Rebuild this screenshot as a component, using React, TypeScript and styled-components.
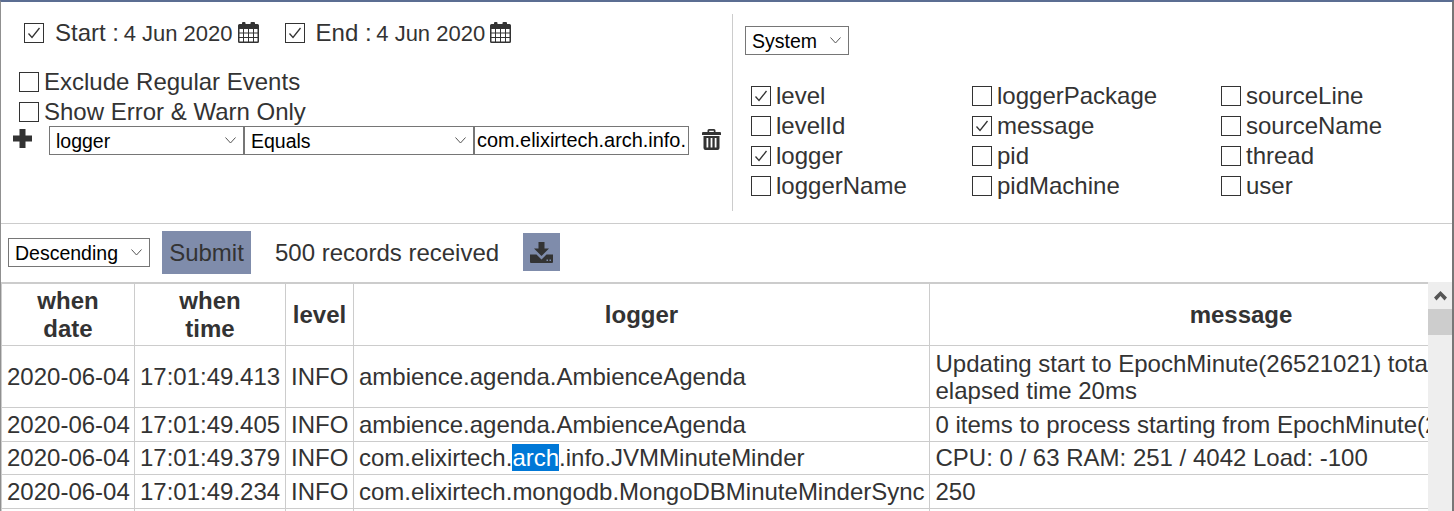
import * as React from 'react';
import styled, { createGlobalStyle } from 'styled-components';

const GlobalStyle = createGlobalStyle`
  html, body {
    margin: 0;
    height: 100%;
    overflow: hidden;
    background: #ffffff;
  }
  body {
    font-family: 'Liberation Sans', Arial, sans-serif;
    font-size: 24px;
    color: #333333;
  }
`;

const Page = styled.div`
  width: 1454px;
  height: 511px;
  box-sizing: border-box;
  border-top: 2px solid #5b6d92;
  border-left: 1px solid #909090;
  border-right: 2px solid #777777;
  display: flex;
  flex-direction: column;
  overflow: hidden;
`;

const TopPanel = styled.div`
  height: 222px;
  flex: none;
  box-sizing: border-box;
  border-bottom: 1px solid #cccccc;
  display: flex;
`;

const LeftPanel = styled.div`
  width: 731px;
  flex: none;
  box-sizing: border-box;
  padding-top: 16px;
`;

const DateRow = styled.div`
  height: 30px;
  display: flex;
  align-items: center;
  padding-left: 23px;
`;

const DateGroup = styled.div`
  display: flex;
  align-items: center;
  margin-right: 26px;
`;

const DateLabel = styled.span`
  margin-left: 11px;
  white-space: pre;
  display: flex;
  align-items: baseline;
`;

const DateValue = styled.span`
  font-size: 22px;
  margin-left: -2px;
`;

const CalendarSvg = styled.svg`
  width: 21px;
  height: 21px;
  margin-left: 5px;
  margin-top: -1px;
  flex: none;
`;

const OptionList = styled.div`
  margin-top: 19px;
  padding-left: 18px;
`;

const CheckRow = styled.label`
  height: 30px;
  display: flex;
  align-items: center;
  gap: 5px;
`;

const Box = styled.span`
  width: 20px;
  height: 20px;
  box-sizing: border-box;
  border: 1px solid #333333;
  background: #ffffff;
  flex: none;
  display: flex;
  align-items: center;
  justify-content: center;
`;

const FilterRow = styled.div`
  display: flex;
  align-items: center;
  height: 29px;
  margin-top: -1px;
  padding-left: 12px;
`;

const PlusSvg = styled.svg`
  width: 19px;
  height: 19px;
  flex: none;
  margin-right: 17px;
  margin-top: -4px;
`;

const TrashSvg = styled.svg`
  width: 19px;
  height: 21px;
  flex: none;
  margin-left: 13px;
  margin-top: -2px;
`;

const SelectWrap = styled.div<{ $width: number }>`
  position: relative;
  width: ${(p) => p.$width}px;
  flex: none;
`;

const NativeSelect = styled.select`
  appearance: none;
  width: 100%;
  height: 29px;
  box-sizing: border-box;
  border: 1px solid #767676;
  border-radius: 0;
  background: #ffffff;
  color: #000000;
  font-family: inherit;
  font-size: 19.5px;
  padding: 0 0 0 6px;
  margin: 0;
  display: block;
`;

const Chevron = styled.svg`
  position: absolute;
  right: 8px;
  top: 11px;
  width: 11px;
  height: 7px;
  pointer-events: none;
`;

const TextField = styled.input`
  width: 215px;
  height: 29px;
  flex: none;
  box-sizing: border-box;
  border: 1px solid #767676;
  border-radius: 0;
  margin: 0;
  padding: 0 2px;
  font-family: inherit;
  font-size: 19.9px;
  color: #000000;
  background: #ffffff;
`;

const RightPanel = styled.div`
  flex: 1;
  margin: 12px 0;
  border-left: 1px solid #cccccc;
  padding: 12px 0 0 12px;
`;

const ColumnGrid = styled.div`
  margin-top: 26px;
  padding-left: 6px;
  display: grid;
  grid-template-columns: 221px 249px 1fr;
  grid-auto-flow: column;
  grid-template-rows: repeat(4, 30px);
`;

const Toolbar = styled.div`
  height: 58px;
  flex: none;
  box-sizing: border-box;
  display: flex;
  align-items: center;
  padding: 0 0 1px 7px;
`;

const SubmitButton = styled.button`
  width: 89px;
  height: 43px;
  margin-left: 12px;
  border: none;
  background: #7f8cab;
  color: #333333;
  font-family: inherit;
  font-size: 24px;
  padding: 0;
`;

const RecordCount = styled.span`
  margin-left: 24px;
`;

const DownloadButton = styled.button`
  width: 37px;
  height: 38px;
  margin: -1px 0 0 24px;
  border: none;
  background: #7f8cab;
  padding: 0;
  display: flex;
  align-items: center;
  justify-content: center;
`;

const TableArea = styled.div`
  flex: 1;
  min-height: 0;
  display: flex;
`;

const TableClip = styled.div`
  flex: 1;
  min-width: 0;
  overflow: hidden;
  border-top: 2px solid #cccccc;
`;

const LogTable = styled.table`
  table-layout: fixed;
  border-collapse: collapse;
  width: 1551px;
`;

const HeadCell = styled.th`
  border: 1px solid #cccccc;
  border-top: none;
  padding: 3px 5px;
  font-size: 24px;
  line-height: 27.5px;
  font-weight: bold;
  text-align: center;
  color: #333333;
`;

const Cell = styled.td`
  border: 1px solid #cccccc;
  padding: 3.5px 5px 2.5px;
  font-size: 24px;
  line-height: 26.5px;
  white-space: nowrap;
  overflow: hidden;
  color: #333333;

  &:last-child {
    padding-left: 5.5px;
  }
`;

const WrappedText = styled.div`
  line-height: 27.5px;
`;

const Highlight = styled.span`
  background: #0078d7;
  color: #ffffff;
`;

const ScrollBar = styled.div`
  width: 24px;
  flex: none;
  background: #eeeeee;
  display: flex;
  flex-direction: column;
`;

const ScrollUp = styled.div`
  height: 27px;
  display: flex;
  align-items: center;
  justify-content: center;
  padding-top: 1px;
  box-sizing: border-box;
`;

const ScrollThumb = styled.div`
  height: 26px;
  background: #cdcdcd;
`;

const Tick = () => (
  <svg width="14" height="12" viewBox="0 0 14 12" fill="none">
    <path d="M1.5 6.5 L5 10.5 L12.5 1" stroke="#333333" strokeWidth="1.3" />
  </svg>
);

const CheckItem: React.FC<{ checked?: boolean; label: string }> = ({ checked, label }) => (
  <CheckRow>
    <Box>{checked && <Tick />}</Box>
    {label}
  </CheckRow>
);

const CalendarIcon = () => (
  <CalendarSvg viewBox="0 0 21 21">
    <path
      fillRule="evenodd"
      fill="#333333"
      d="M3 2h1V1a1 1 0 0 1 1-1h1.500a1 1 0 0 1 1 1v1h5V1a1 1 0 0 1 1-1H16a1 1 0 0 1 1 1v1h2.500A1.500 1.500 0 0 1 21 3.500V19.500A1.500 1.500 0 0 1 19.500 21H1.500A1.500 1.500 0 0 1 0 19.500V3.500A1.500 1.500 0 0 1 1.500 2ZM1.500 7v3.500h3.500V7ZM6 7v3.500h4V7ZM11 7v3.500h4V7ZM16 7v3.500h3.500V7ZM1.500 11.500v3.500h3.500v-3.500ZM6 11.500v3.500h4v-3.500ZM11 11.500v3.500h4v-3.500ZM16 11.500v3.500h3.500v-3.500ZM1.500 16v3.500h3.500V16ZM6 16v3.500h4V16ZM11 16v3.500h4V16ZM16 16v3.500h3.500V16Z"
    />
  </CalendarSvg>
);

const PlusIcon = () => (
  <PlusSvg viewBox="0 0 19 19">
    <path fill="#333333" d="M6.500 0h6v6.500H19v6h-6.500V19h-6v-6.500H0v-6h6.500Z" />
  </PlusSvg>
);

const TrashIcon = () => (
  <TrashSvg viewBox="0 0 19 21">
    <path
      fillRule="evenodd"
      fill="#333333"
      d="M5.500 3V1.500A1.500 1.500 0 0 1 7 0h5a1.500 1.500 0 0 1 1.500 1.500V3H18a1 1 0 0 1 1 1v2H0V4a1 1 0 0 1 1-1ZM7.200 3h4.600V1.700H7.200ZM1.500 7h16v12a2 2 0 0 1-2 2h-12a2 2 0 0 1-2-2ZM4.500 9v9.500h1.800V9ZM8.600 9v9.500h1.800V9ZM12.700 9v9.500h1.800V9Z"
    />
  </TrashSvg>
);

const DownloadIcon = () => (
  <svg width="23" height="21" viewBox="0 0 23 21">
    <path
      fillRule="evenodd"
      fill="#333333"
      d="M8.500 0h6v6.500H19L11.500 14 4 6.500h4.500ZM0 12.500h6.500l5 5 5-5H23V20a1 1 0 0 1-1 1H1a1 1 0 0 1-1-1ZM16.500 17.500v1.500h1.500v-1.500ZM19.500 17.500v1.500h1.500v-1.500Z"
    />
  </svg>
);

const Select: React.FC<{ width: number; value: string }> = ({ width, value }) => (
  <SelectWrap $width={width}>
    <NativeSelect defaultValue={value}>
      <option>{value}</option>
    </NativeSelect>
    <Chevron viewBox="0 0 11 7" fill="none">
      <path d="M0.5 0.5 L5.5 6 L10.500 0.5" stroke="#555555" strokeWidth="1" />
    </Chevron>
  </SelectWrap>
);

const columns = [
  ['level', true],
  ['levelId', false],
  ['logger', true],
  ['loggerName', false],
  ['loggerPackage', false],
  ['message', true],
  ['pid', false],
  ['pidMachine', false],
  ['sourceLine', false],
  ['sourceName', false],
  ['thread', false],
  ['user', false],
] as const;

const rows: { time: string; logger: React.ReactNode; message: React.ReactNode }[] = [
  {
    time: '17:01:49.413',
    logger: 'ambience.agenda.AmbienceAgenda',
    message: (
      <WrappedText>
        Updating start to EpochMinute(26521021) total
        <br />
        elapsed time 20ms
      </WrappedText>
    ),
  },
  {
    time: '17:01:49.405',
    logger: 'ambience.agenda.AmbienceAgenda',
    message: '0 items to process starting from EpochMinute(26521021)',
  },
  {
    time: '17:01:49.379',
    logger: (
      <>
        com.elixirtech.<Highlight>arch</Highlight>.info.JVMMinuteMinder
      </>
    ),
    message: 'CPU: 0 / 63 RAM: 251 / 4042 Load: -100',
  },
  {
    time: '17:01:49.234',
    logger: 'com.elixirtech.mongodb.MongoDBMinuteMinderSync',
    message: '250',
  },
];

const App: React.FC = () => (
  <Page>
    <GlobalStyle />
    <TopPanel>
      <LeftPanel>
        <DateRow>
          <DateGroup>
            <Box>
              <Tick />
            </Box>
            <DateLabel>
              Start : <DateValue>4 Jun 2020</DateValue>
            </DateLabel>
            <CalendarIcon />
          </DateGroup>
          <DateGroup>
            <Box>
              <Tick />
            </Box>
            <DateLabel>
              End : <DateValue>4 Jun 2020</DateValue>
            </DateLabel>
            <CalendarIcon />
          </DateGroup>
        </DateRow>
        <OptionList>
          <CheckItem label="Exclude Regular Events" />
          <CheckItem label="Show Error & Warn Only" />
        </OptionList>
        <FilterRow>
          <PlusIcon />
          <Select width={195} value="logger" />
          <Select width={230} value="Equals" />
          <TextField defaultValue="com.elixirtech.arch.info." />
          <TrashIcon />
        </FilterRow>
      </LeftPanel>
      <RightPanel>
        <Select width={104} value="System" />
        <ColumnGrid>
          {columns.map(([label, checked]) => (
            <CheckItem key={label} label={label} checked={checked} />
          ))}
        </ColumnGrid>
      </RightPanel>
    </TopPanel>
    <Toolbar>
      <Select width={142} value="Descending" />
      <SubmitButton>Submit</SubmitButton>
      <RecordCount>500 records received</RecordCount>
      <DownloadButton>
        <DownloadIcon />
      </DownloadButton>
    </Toolbar>
    <TableArea>
      <TableClip>
        <LogTable>
          <colgroup>
            <col style={{ width: 133 }} />
            <col style={{ width: 151 }} />
            <col style={{ width: 68 }} />
            <col style={{ width: 576 }} />
            <col style={{ width: 623 }} />
          </colgroup>
          <thead>
            <tr>
              <HeadCell>
                when
                <br />
                date
              </HeadCell>
              <HeadCell>
                when
                <br />
                time
              </HeadCell>
              <HeadCell>level</HeadCell>
              <HeadCell>logger</HeadCell>
              <HeadCell>message</HeadCell>
            </tr>
          </thead>
          <tbody>
            {rows.map((row) => (
              <tr key={row.time}>
                <Cell>2020-06-04</Cell>
                <Cell>{row.time}</Cell>
                <Cell>INFO</Cell>
                <Cell>{row.logger}</Cell>
                <Cell>{row.message}</Cell>
              </tr>
            ))}
            <tr>
              <Cell>&nbsp;</Cell>
              <Cell>&nbsp;</Cell>
              <Cell>&nbsp;</Cell>
              <Cell>&nbsp;</Cell>
              <Cell>&nbsp;</Cell>
            </tr>
          </tbody>
        </LogTable>
      </TableClip>
      <ScrollBar>
        <ScrollUp>
          <svg width="13" height="10" viewBox="0 0 13 10">
            <path fill="#555555" d="M6.500 0L13 6.500 10.500 9.500 6.500 5 2.500 9.500 0 6.500Z" />
          </svg>
        </ScrollUp>
        <ScrollThumb />
      </ScrollBar>
    </TableArea>
  </Page>
);

export default App;
